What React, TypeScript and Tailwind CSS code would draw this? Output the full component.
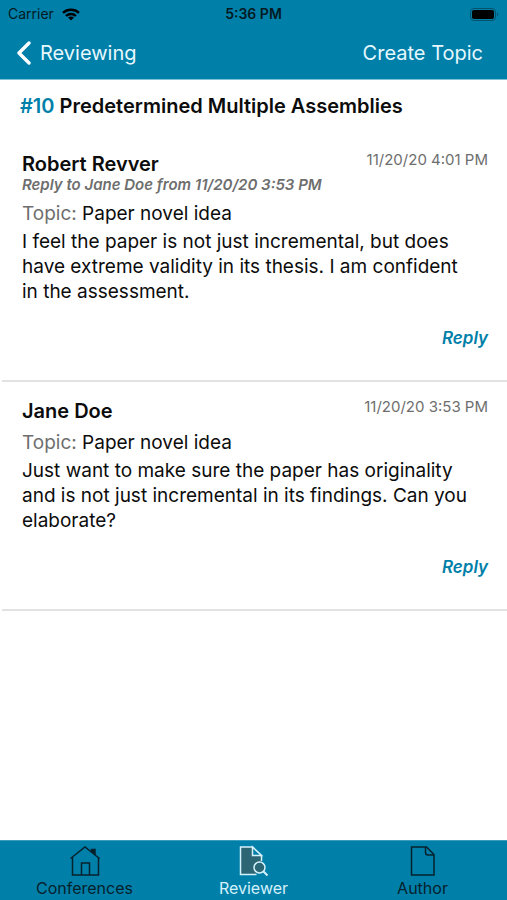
import React from "react";

type Message = {
  id: number;
  author: string;
  date: string;
  replyTo?: string;
  topic: string;
  body: string;
};

const messages: Message[] = [
  {
    id: 1,
    author: "Robert Revver",
    date: "11/20/20 4:01 PM",
    replyTo: "Reply to Jane Doe from 11/20/20 3:53 PM",
    topic: "Paper novel idea",
    body: "I feel the paper is not just incremental, but does have extreme validity in its thesis. I am confident in the assessment.",
  },
  {
    id: 2,
    author: "Jane Doe",
    date: "11/20/20 3:53 PM",
    topic: "Paper novel idea",
    body: "Just want to make sure the paper has originality and is not just incremental in its findings. Can you elaborate?",
  },
];

const StatusBar = () => (
  <div className="grid grid-cols-3 items-center h-7 px-2 text-sm text-[#041a22]">
    <div className="flex items-center gap-2">
      <span>Carrier</span>
      <svg width="18" height="13" viewBox="0 0 18 13" fill="none" stroke="#000" strokeWidth="2.4" aria-hidden="true">
        <path d="M1 4.8C5.4.7 12.6.7 17 4.8" />
        <path d="M4 8C6.8 5.3 11.2 5.3 14 8" />
        <path d="M9 12.6 6 9.6C7.7 8.2 10.3 8.2 12 9.6Z" fill="#000" stroke="none" />
      </svg>
    </div>
    <span className="text-center font-semibold">5:36 PM</span>
    <svg className="justify-self-end" width="29" height="13" viewBox="0 0 29 13" aria-hidden="true">
      <rect x="0.5" y="0.5" width="25" height="12" rx="3.5" fill="none" stroke="#04526b" />
      <rect x="2" y="2" width="22" height="9" rx="2" fill="#000" />
      <path d="M27 4.5C28.6 5 28.6 8 27 8.5Z" fill="#04526b" />
    </svg>
  </div>
);

const Header = () => (
  <header className="bg-[#007fa9] border-b border-[#7cc3da]">
    <StatusBar />
    <div className="flex justify-between items-center h-[51px] pb-0.5 pl-4 pr-6 text-xl text-[#e6f8ff]">
      <button type="button" className="flex items-center gap-2">
        <svg width="16" height="24" viewBox="0 0 16 24" fill="none" stroke="#fff" strokeWidth="3.4" strokeLinecap="round" strokeLinejoin="round" aria-hidden="true">
          <path d="M13 2 3 12 13 22" />
        </svg>
        Reviewing
      </button>
      <button type="button">Create Topic</button>
    </div>
  </header>
);

const MessageItem = ({ message }: { message: Message }) => (
  <article className="ml-0.5 pl-5 pr-[19px] pt-[17px] pb-[30px] border-b-2 border-[#e2e2e2]">
    <div className="flex justify-between items-start">
      <h2 className="text-xl leading-6 font-semibold">{message.author}</h2>
      <time className="text-[15px] leading-4 text-[#6e6e6e]">{message.date}</time>
    </div>
    {message.replyTo && (
      <p className="text-[15px] leading-[18px] font-semibold italic text-[#6e6e6e]">{message.replyTo}</p>
    )}
    <p className="mt-[7px] text-[19px] leading-[25px]">
      <span className="text-[#6e6e6e]">Topic:</span> {message.topic}
    </p>
    <p className="mt-[3px] pr-3 text-[19px] leading-[25px]">{message.body}</p>
    <div className="mt-[22px] flex justify-end">
      <button type="button" className="text-[17px] leading-6 font-semibold italic text-[#007fa9]">
        Reply
      </button>
    </div>
  </article>
);

const HomeIcon = () => (
  <svg width="32" height="32" viewBox="0 0 32 32" fill="none" stroke="currentColor" strokeWidth="1.5" aria-hidden="true">
    <path d="M1.5 13.5 16 2 30.5 13.5" />
    <path d="M3.5 12V30H29.5V12" />
    <path d="M12.5 30V18H20.5V30" />
    <path d="M22.5 6V4.5H26V9.5Z" fill="currentColor" />
  </svg>
);

const ReviewIcon = () => (
  <svg width="32" height="32" viewBox="0 0 32 32" fill="#2c6675" stroke="currentColor" strokeWidth="1.5" aria-hidden="true">
    <path d="M2.5 2H14.5L23.5 10.5V17.5L18 29.5H2.5Z" stroke="none" />
    <path d="M23.5 16V10.5L14.5 2H2.5V29.5H18.5" fill="none" />
    <path d="M14.5 2V10.5H23.5Z" fill="#007fa9" />
    <circle cx="21.5" cy="22.5" r="5.5" />
    <path d="M25.5 26.5 29.5 30.5" strokeWidth="2" />
  </svg>
);

const FileIcon = () => (
  <svg width="32" height="32" viewBox="0 0 32 32" fill="none" stroke="currentColor" strokeWidth="1.5" aria-hidden="true">
    <path d="M4.5 2H19.5L27 9.5V30H4.5Z" />
    <path d="M18.5 2V7.5Q18.5 10 21 10H27" />
  </svg>
);

const TabBar = () => (
  <nav className="grid grid-cols-3 bg-[#007fa9] border-t border-[#3a9dbe] text-base text-[#06222d]">
    <a href="#conferences" className="flex flex-col items-center pt-1">
      <HomeIcon />
      <span className="leading-[23px]">Conferences</span>
    </a>
    <a href="#reviewer" aria-current="page" className="flex flex-col items-center pt-1 text-[#d5f1fb]">
      <ReviewIcon />
      <span className="leading-[23px]">Reviewer</span>
    </a>
    <a href="#author" className="flex flex-col items-center pt-1">
      <FileIcon />
      <span className="leading-[23px]">Author</span>
    </a>
  </nav>
);

export default function App() {
  return (
    <div className="flex flex-col min-h-screen bg-white text-[#0c0c0c] font-['Inter',sans-serif]">
      <Header />
      <main className="flex-1">
        <h1 className="px-5 pt-3.5 pb-[17px] text-xl leading-6 font-semibold">
          <span className="text-[#007fa9]">#10</span> Predetermined Multiple Assemblies
        </h1>
        {messages.map((message) => (
          <MessageItem key={message.id} message={message} />
        ))}
      </main>
      <TabBar />
    </div>
  );
}
